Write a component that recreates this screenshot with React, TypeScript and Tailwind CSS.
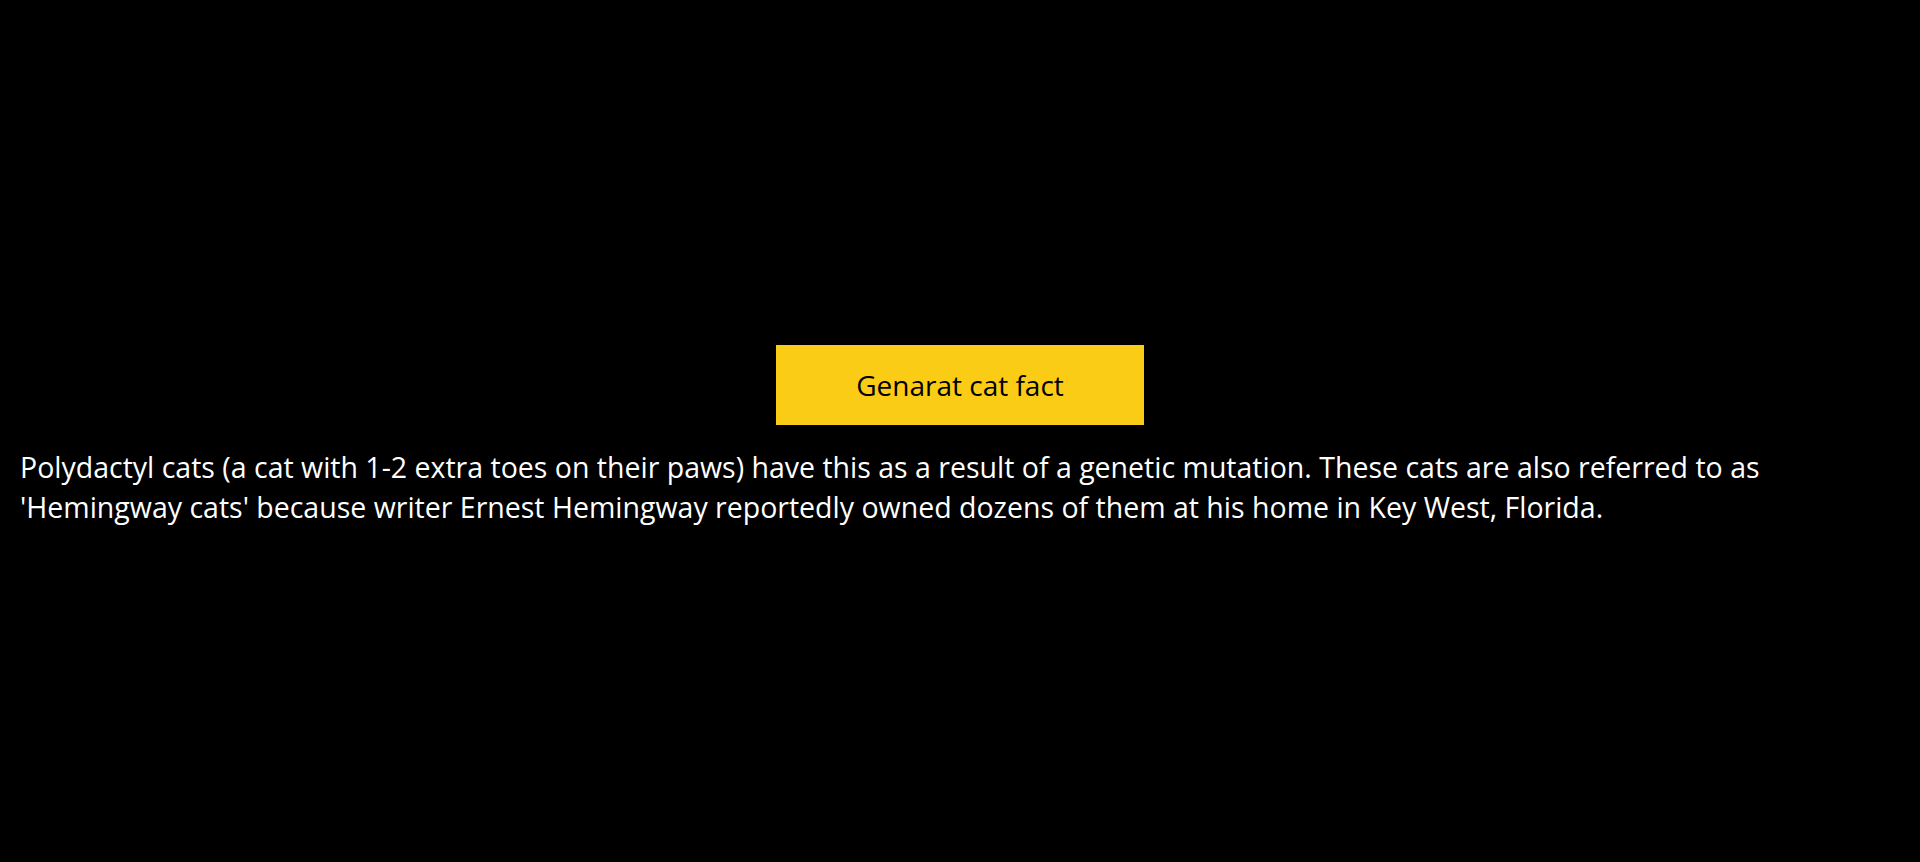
export default function App() {
  return (
    <div
      className="h-[862px] w-full bg-black flex flex-col justify-center items-center"
      style={{ fontFamily: '"Open Sans", "Noto Sans", sans-serif' }}
    >
      <button className="w-[368px] h-[80px] bg-[#facc15] text-black text-[28px] mt-[10px]">
        Genarat cat fact
      </button>
      <p className="w-full px-[20px] mt-[22px] text-white text-[28.5px] leading-[40px]">
        Polydactyl cats (a cat with 1-2 extra toes on their paws) have this as a result of a genetic mutation. These cats are also referred to as 'Hemingway cats' because writer Ernest Hemingway reportedly owned dozens of them at his home in Key West, Florida.
      </p>
    </div>
  );
}
